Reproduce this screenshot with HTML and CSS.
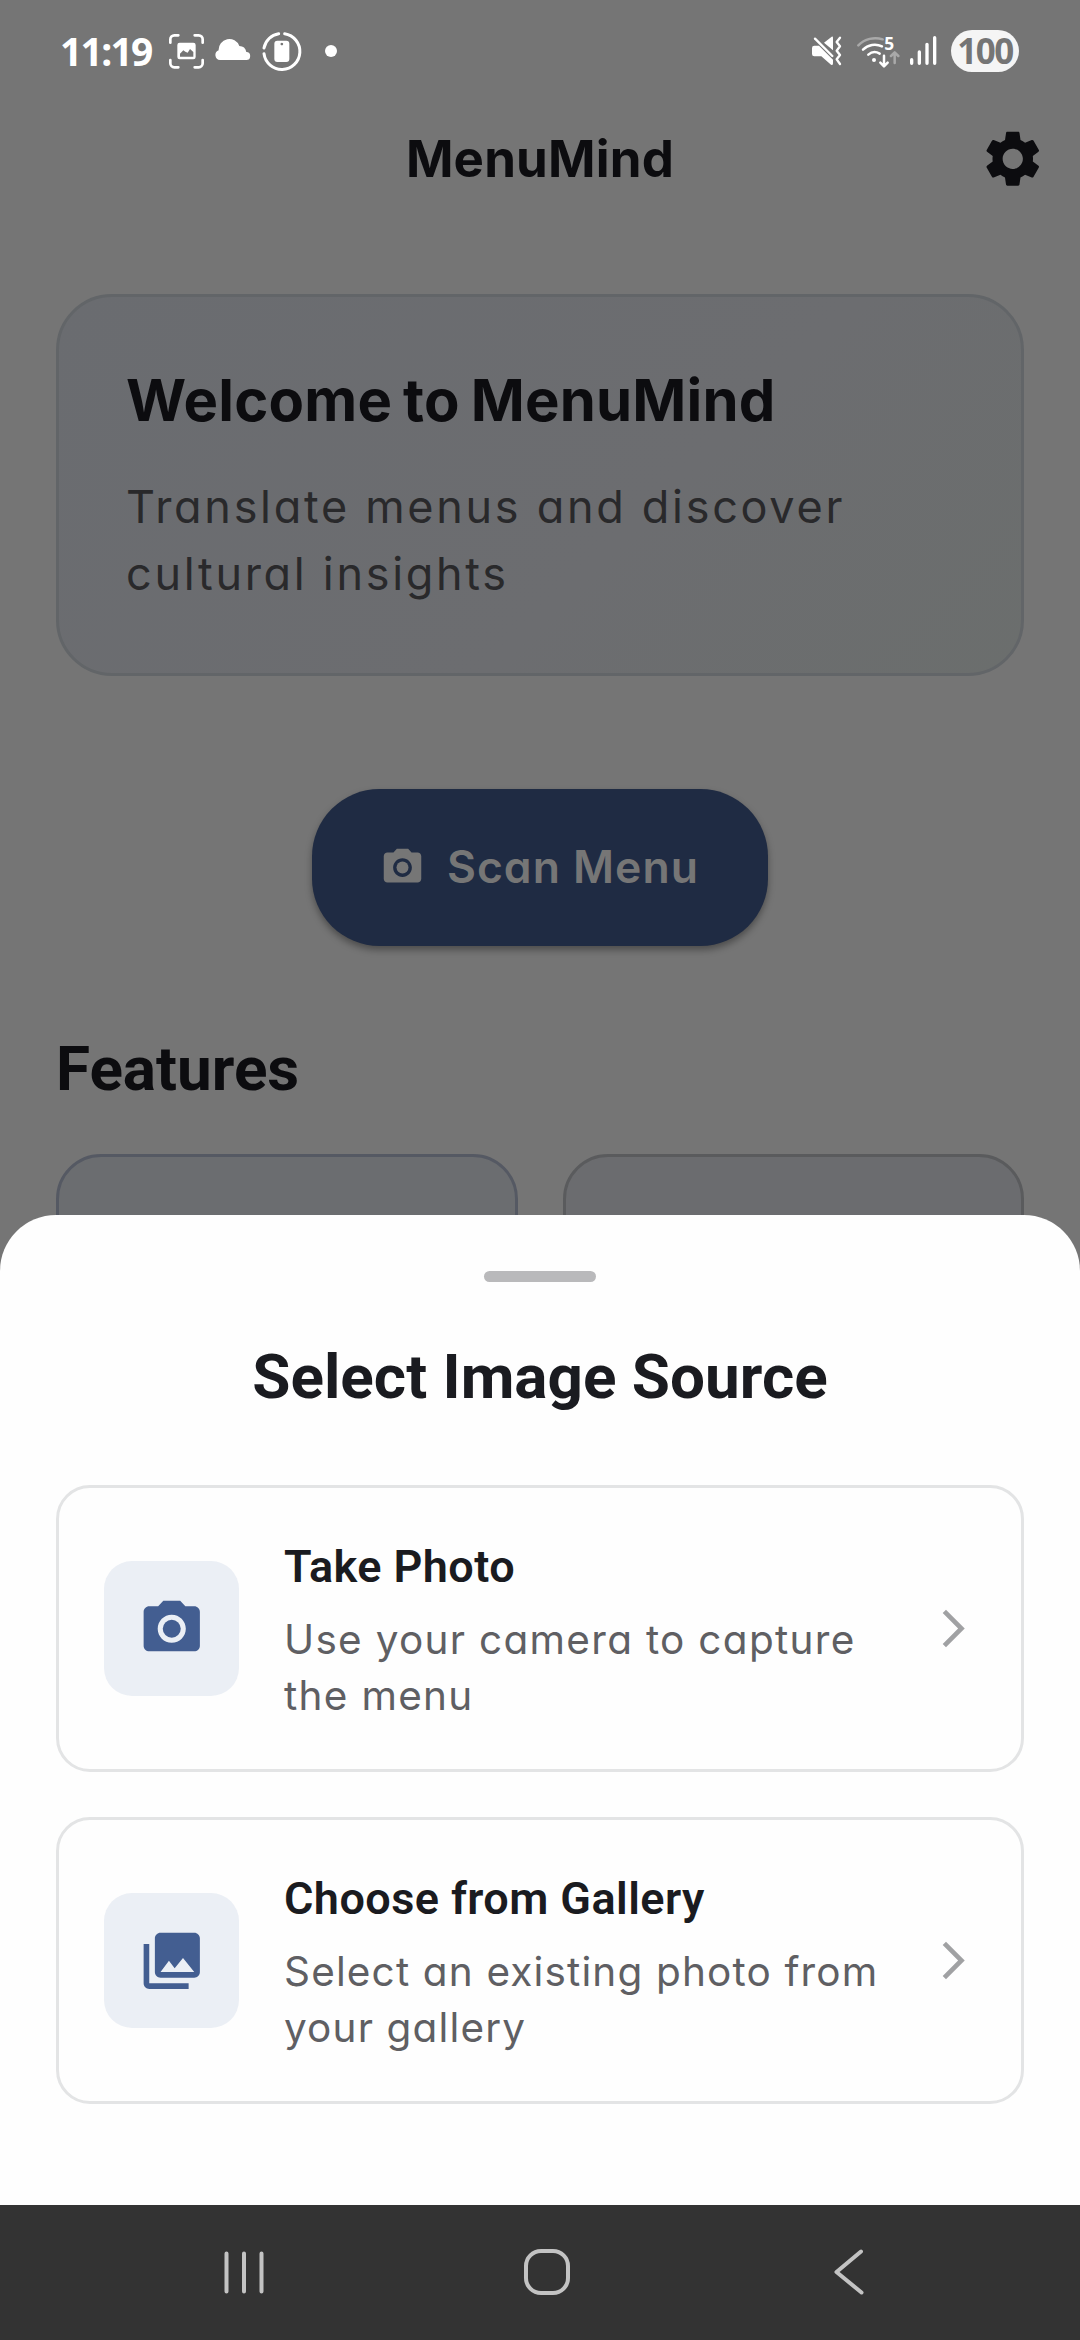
FILE: index.html
```html
<!DOCTYPE html>
<html lang="en">
<head>
<meta charset="utf-8">
<title>MenuMind</title>
<link rel="stylesheet" href="styles.css">
</head>
<body>
<div class="screen">
  <div class="status-bar">
    <span class="clock">11:19</span>
    <div class="status-left">
      <svg width="35" height="90" viewBox="390 0 105 270" fill="none" stroke="#fff" stroke-width="8" stroke-linecap="round">
        <path d="M394 98v-10a12 12 0 0 1 12-12h12M467 76h12a12 12 0 0 1 12 12v10M491 150v10a12 12 0 0 1-12 12h-12M418 172h-12a12 12 0 0 1-12-12v-10"/>
        <path fill="#fff" stroke="none" fill-rule="evenodd" d="M422 98h41q7 0 7 7v36q0 7-7 7h-41q-7 0-7-7v-36q0-7 7-7zM423 131v9h40v-14l-10-9-7 11-7-3-6-4z"/>
      </svg>
      <svg width="36" height="90" viewBox="530 0 108 270" fill="#fff">
        <path d="M545 150a15 15 0 0 1-4-29 32 32 0 0 1 62-13 22 22 0 0 1 21 18 12 12 0 0 1-1 24z"/>
      </svg>
      <svg width="40" height="90" viewBox="665 0 120 270" fill="none" stroke="#fff" stroke-width="9" stroke-linecap="round">
        <path d="M733 71a54 54 0 1 1-62 60M671 114a54 54 0 0 1 44-43"/>
        <path fill="#fff" stroke="none" fill-rule="evenodd" d="M711 92h27q9 0 9 9v46q0 9-9 9h-27q-9 0-9-9v-46q0-9 9-9zM724.500 98a4 4 0 1 0 .01 0z"/>
      </svg>
      <span class="dot"></span>
    </div>
    <div class="status-right">
      <svg width="32" height="90" viewBox="93 0 96 270" fill="#fff">
        <path d="M132 98l23-18q4-2 4 3v38zM103 107h14l42 42v11q0 8-6 4l-29-25h-21q-7 0-7-7v-18q0-7 7-7z"/>
        <path d="M105 86l52 52" fill="none" stroke="#fff" stroke-width="7" stroke-linecap="round"/>
        <path d="M180 83l-10 13 10 13-10 13 10 13-10 13 10 14" fill="none" stroke="#fff" stroke-width="7" stroke-linecap="round" stroke-linejoin="round"/>
      </svg>
      <svg width="43" height="90" viewBox="233 0 129 270" fill="none" stroke="#fff" stroke-width="7.500" stroke-linecap="round">
        <path d="M237 106a72 72 0 0 1 73-18" stroke="#a9a9a9"/>
        <path d="M251 119a50 50 0 0 1 57-10M267 134a29 29 0 0 1 34-3"/>
        <circle cx="284" cy="150" r="6" fill="#fff" stroke="none"/>
        <path d="M314 137v31M303 158l11 11 11-11" stroke-linejoin="round"/>
        <path d="M346 159v-31M335 138l11-11 11 11" stroke="#a9a9a9" stroke-linejoin="round"/>
        <text class="wifi-gen" x="315" y="121">5</text>
      </svg>
      <svg width="28" height="90" viewBox="388 0 84 270" stroke="#fff" stroke-width="10" stroke-linecap="round">
        <path d="M396 149v11M419 126v34M442 103v57M465 83v77"/>
      </svg>
      <span class="battery">100</span>
    </div>
  </div>

  <div class="app-bar">
    <span></span>
    <h1 class="app-title">MenuMind</h1>
    <svg class="gear" viewBox="0 0 24 24" fill="#0c0c0f"><path d="M19.140 12.940c.04-.3.060-.610.060-.940 0-.320-.020-.640-.070-.940l2.030-1.580c.180-.140.230-.410.120-.610l-1.920-3.320c-.120-.220-.370-.290-.590-.220l-2.390.960c-.500-.380-1.030-.700-1.620-.940l-.360-2.540c-.040-.240-.240-.410-.480-.410h-3.840c-.240 0-.430.170-.470.410l-.360 2.540c-.590.240-1.130.570-1.620.940l-2.390-.960c-.220-.080-.470 0-.590.220L2.740 8.870c-.120.210-.080.470.120.610l2.030 1.580c-.050.300-.090.630-.090.940s.020.640.070.940l-2.030 1.580c-.180.140-.230.410-.120.610l1.920 3.320c.120.220.370.290.590.220l2.390-.960c.500.380 1.030.700 1.620.940l.360 2.540c.050.240.240.410.480.410h3.840c.240 0 .440-.170.470-.410l.360-2.540c.590-.240 1.130-.560 1.620-.940l2.390.960c.220.080.470 0 .590-.220l1.920-3.320c.120-.220.070-.470-.120-.610l-2.010-1.580zM12 15.600c-1.980 0-3.600-1.620-3.600-3.600s1.620-3.600 3.600-3.600 3.600 1.620 3.600 3.600-1.620 3.600-3.600 3.600z"/></svg>
  </div>

  <main class="page">
    <section class="welcome">
      <h2 class="welcome-title">Welcome to MenuMind</h2>
      <p class="welcome-text">Translate menus and discover<br>cultural insights</p>
    </section>
    <button class="scan">
      <svg width="45" height="45" viewBox="0 0 24 24" fill="#767676"><circle cx="12" cy="12" r="3.200"/><path d="M9 2 7.170 4H4c-1.100 0-2 .9-2 2v12c0 1.100.9 2 2 2h16c1.100 0 2-.9 2-2V6c0-1.100-.9-2-2-2h-3.170L15 2H9zm3 15c-2.760 0-5-2.240-5-5s2.240-5 5-5 5 2.240 5 5-2.240 5-5 5z"/></svg>
      <span class="scan-label">Scan Menu</span>
    </button>
    <h2 class="features-title">Features</h2>
    <div class="features">
      <div class="feature feature-blue"></div>
      <div class="feature"></div>
    </div>
  </main>

  <section class="sheet">
    <div class="handle"></div>
    <h2 class="sheet-title">Select Image Source</h2>
    <div class="options">
      <div class="option">
        <div class="option-icon">
          <svg width="67.500" height="67.500" viewBox="0 0 24 24" fill="#435e91"><circle cx="12" cy="12" r="3.200"/><path d="M9 2 7.170 4H4c-1.100 0-2 .9-2 2v12c0 1.100.9 2 2 2h16c1.100 0 2-.9 2-2V6c0-1.100-.9-2-2-2h-3.170L15 2H9zm3 15c-2.760 0-5-2.240-5-5s2.240-5 5-5 5 2.240 5 5-2.240 5-5 5z"/></svg>
        </div>
        <div class="option-body">
          <h3 class="option-title">Take Photo</h3>
          <p class="option-text">Use your camera to capture<br>the menu</p>
        </div>
        <svg class="chevron" viewBox="0 0 24 24" fill="#a0a1a3"><path d="M6.230 20.230 8 22l10-10L8 2 6.230 3.770 14.460 12z"/></svg>
      </div>
      <div class="option">
        <div class="option-icon">
          <svg width="67.500" height="67.500" viewBox="0 0 24 24" fill="#435e91"><path d="M22 16V4c0-1.100-.9-2-2-2H8c-1.100 0-2 .9-2 2v12c0 1.100.9 2 2 2h12c1.100 0 2-.9 2-2zm-11-4 2.030 2.710L16 11l4 5H8l3-4zM2 6v14c0 1.100.9 2 2 2h14v-2H4V6H2z"/></svg>
        </div>
        <div class="option-body">
          <h3 class="option-title">Choose from Gallery</h3>
          <p class="option-text gallery-text">Select an existing photo from<br>your gallery</p>
        </div>
        <svg class="chevron" viewBox="0 0 24 24" fill="#a0a1a3"><path d="M6.230 20.230 8 22l10-10L8 2 6.230 3.770 14.460 12z"/></svg>
      </div>
    </div>
  </section>

  <nav class="nav-bar">
    <svg width="50" height="50" viewBox="0 0 50 50" fill="none" stroke="#c3c3c3" stroke-width="4" stroke-linecap="round"><path d="M7.500 5.500v38M25 5.500v38M42.500 5.500v38"/></svg>
    <svg width="50" height="50" viewBox="0 0 50 50" fill="none" stroke="#c3c3c3" stroke-width="4"><rect x="4" y="3" width="42" height="42" rx="15"/></svg>
    <svg width="50" height="50" viewBox="0 0 50 50" fill="none" stroke="#c3c3c3" stroke-width="4" stroke-linecap="round" stroke-linejoin="round"><path d="M37 3.500 12.500 24 37.500 44.500"/></svg>
  </nav>
</div>
</body>
</html>
```
FILE: styles.css
```css
* { box-sizing: border-box; margin: 0; padding: 0; }

body { background: #757575; }

svg { display: block; flex: none; }

.screen {
  position: relative;
  display: flex;
  flex-direction: column;
  width: 1080px;
  height: 2340px;
  overflow: hidden;
  background: #757575;
  font-family: Inter, "Noto Sans", sans-serif;
  font-feature-settings: "cv11";
}

/* status bar */
.status-bar {
  display: flex;
  height: 102px;
  padding: 10px 61px 2px 60px;
}
.clock {
  width: 109px;
  font: 700 39px/81px "Noto Sans", sans-serif;
  letter-spacing: -1.7px;
  color: #fff;
}
.status-left { display: flex; gap: 11px; align-items: flex-start; }
.dot {
  width: 12px;
  height: 12px;
  margin: 35px 0 0 12px;
  border-radius: 50%;
  background: #fff;
}
.status-right { display: flex; margin-left: auto; }
.status-right svg + svg { margin-left: 14px; }
.status-right svg:nth-child(3) { margin-left: 9px; }
.wifi-gen {
  font: 700 52px "Noto Sans", sans-serif;
  fill: #fff;
  stroke: none;
}
.battery {
  width: 68px;
  height: 42px;
  margin: 20px 0 0 14px;
  border-radius: 21px;
  background: #f5f5f5;
  font: 700 35px/42px "Noto Sans", sans-serif;
  letter-spacing: -1.500px;
  text-align: center;
  color: #757575;
}

/* app bar */
.app-bar {
  display: grid;
  grid-template-columns: 1fr auto 1fr;
  align-items: center;
  height: 114px;
  padding: 0 34px;
}
.app-title {
  font-size: 51px;
  font-weight: 650;
  line-height: 64px;
  letter-spacing: 0.200px;
  color: #0c0c0f;
}
.gear { justify-self: end; width: 67.500px; height: 67.500px; }

/* page behind the sheet */
.page {
  display: flex;
  flex-direction: column;
  flex: 1;
  padding: 78px 56px 0;
}
.welcome {
  height: 382px;
  padding: 64px 67px;
  border: 3px solid #626568;
  border-radius: 56px;
  background: linear-gradient(135deg, #6a6c70, #6c6d70 60%, #6b6e6d);
}
.welcome-title {
  font-size: 58px;
  font-weight: 650;
  line-height: 79px;
  letter-spacing: 0.200px;
  word-spacing: -3px;
  color: #0c0c0f;
}
.welcome-text {
  margin-top: 33px;
  font-size: 45px;
  line-height: 67px;
  letter-spacing: 2.700px;
  white-space: nowrap;
  color: #29292b;
}
.scan {
  display: flex;
  align-items: center;
  align-self: center;
  gap: 22px;
  width: 456px;
  height: 157.500px;
  margin-top: 112.500px;
  padding-left: 68px;
  border: 0;
  border-radius: 67.500px;
  background: #1f2b43;
  box-shadow: 0 4px 7px rgba(0, 0, 0, 0.350);
  color: #767676;
  font: 600 44.500px/56px Inter, sans-serif;
  font-feature-settings: "cv11";
}
.scan-label { letter-spacing: 1px; }
.features-title {
  margin-top: 83px;
  font: 700 62px/79px Roboto, sans-serif;
  color: #0c0c0f;
}
.features {
  display: grid;
  grid-template-columns: 1fr 1fr;
  gap: 45px;
  margin-top: 46px;
}
.feature {
  height: 400px;
  border: 3px solid #5a5b5d;
  border-radius: 45px;
  background: #6b6c6f;
}
.feature-blue { border-color: #555963; background: #6b6d70; }

/* bottom sheet */
.sheet {
  position: absolute;
  left: 0;
  right: 0;
  bottom: 135px;
  height: 990px;
  padding: 56px 56px 0;
  border-radius: 56px 56px 0 0;
  background: #fefefe;
}
.handle {
  width: 112px;
  height: 11px;
  margin: 0 auto;
  border-radius: 6px;
  background: #b9b9bb;
}
.sheet-title {
  margin-top: 55px;
  font: 700 62px/79px Roboto, sans-serif;
  text-align: center;
  color: #1a1b20;
}
.options {
  display: flex;
  flex-direction: column;
  gap: 45px;
  margin-top: 69px;
}
.option {
  display: flex;
  align-items: center;
  gap: 45px;
  height: 287px;
  padding: 0 45px;
  border: 3px solid #e3e4e5;
  border-radius: 34px;
}
.option-icon {
  display: flex;
  flex: none;
  align-items: center;
  justify-content: center;
  width: 135px;
  height: 135px;
  border-radius: 28px;
  background: #ebeff5;
}
.option-body { flex: 1; }
.option-title {
  font: 600 45px/66px Roboto, sans-serif;
  letter-spacing: 0.420px;
  color: #1a1b20;
}
.option-text {
  margin-top: 12px;
  font-size: 40.500px;
  line-height: 56px;
  letter-spacing: 1.300px;
  white-space: nowrap;
  color: #5f5f63;
}
.gallery-text { letter-spacing: 1.150px; }
.chevron { width: 45px; height: 45px; }

/* navigation bar */
.nav-bar {
  position: relative;
  display: flex;
  justify-content: space-between;
  align-items: center;
  flex: none;
  height: 135px;
  padding: 0 206px 0 219px;
  background: #333;
}
```
